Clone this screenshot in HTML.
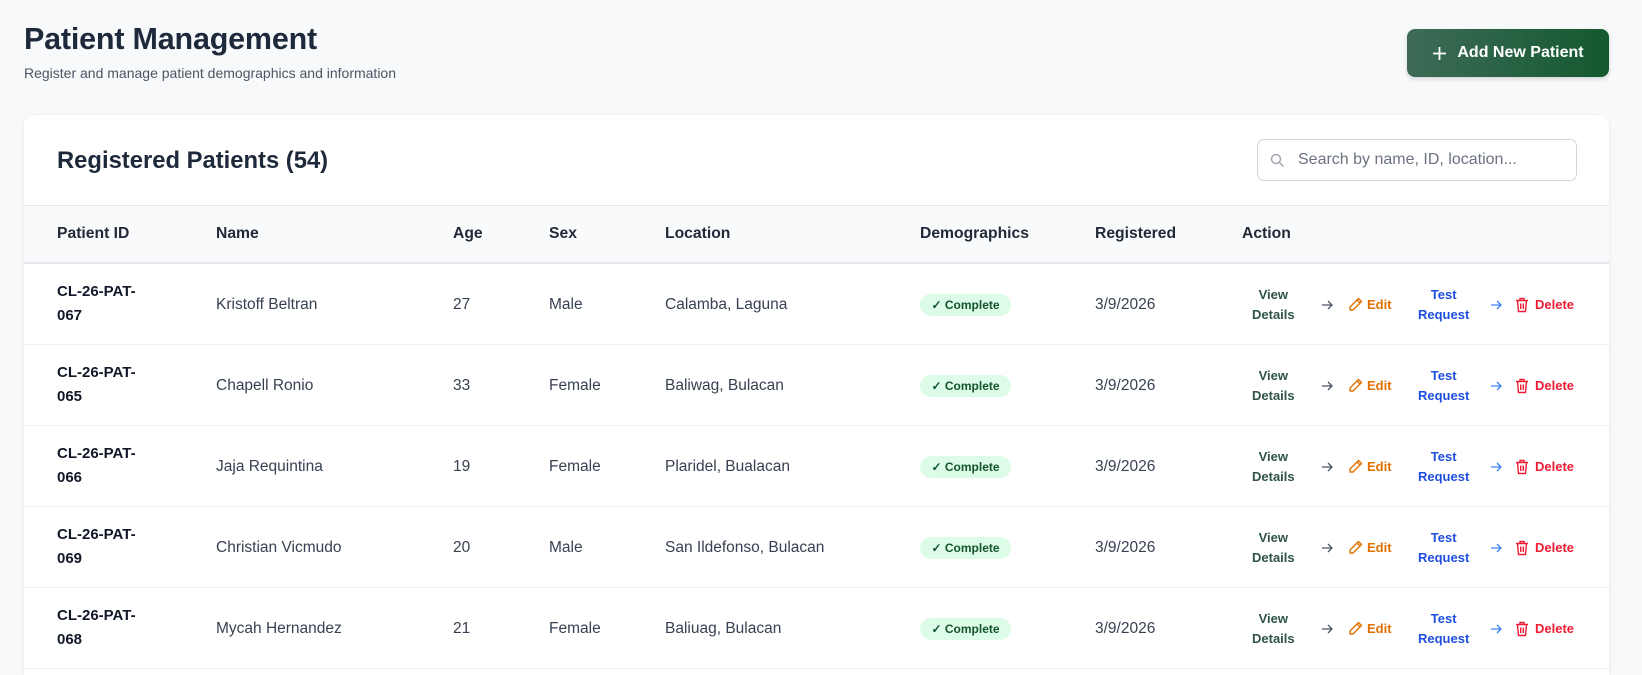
<!DOCTYPE html>
<html><head><meta charset="utf-8"><style>
*{margin:0;padding:0;box-sizing:border-box}
html,body{width:1642px;height:675px;overflow:hidden}
body{background:#f8f9fb;font-family:"Liberation Sans",Arial,sans-serif;color:#1f2937;position:relative}
.abs{position:absolute}
h1{position:absolute;left:24px;top:22px;font-size:30.5px;font-weight:700;color:#1e293b;letter-spacing:-0.2px}
.sub{left:24px;top:65px;font-size:14px;color:#4b5563}
.btn{left:1407px;top:29px;width:202px;height:48px;border-radius:8px;background:linear-gradient(90deg,#3e6b58,#13592f);color:#fff;font-weight:700;font-size:16px;display:flex;align-items:center;justify-content:center;gap:10px;box-shadow:0 2px 4px rgba(0,0,0,.15)}
.card{left:24px;top:115px;width:1585px;height:560px;background:#fff;border-radius:10px 10px 0 0;box-shadow:0 1px 4px rgba(0,0,0,.08);overflow:hidden}
.ct{left:33px;top:32px;font-size:23.8px;font-weight:700;color:#1e293b}
.search{left:1233px;top:24px;width:320px;height:42px;border:1px solid #d1d5db;border-radius:7px}
.search span{position:absolute;left:40px;top:11px;font-size:16px;color:#6b7280}
.thead{left:0;top:90px;width:100%;height:59px;background:#f9fafb;border-top:1px solid #e5e7eb;border-bottom:2px solid #e5e7eb}
.th{position:absolute;top:19px;font-size:15.7px;font-weight:700;color:#1f2937}
.row{left:0;width:100%;height:81px;border-bottom:1px solid #eef0f2}
.td{position:absolute;font-size:15.5px;color:#374151;top:32px}
.id{position:absolute;left:33px;top:16px;font-size:15px;font-weight:700;line-height:24px;color:#111827}
.badge{position:absolute;left:896px;top:30px;width:91px;height:22px;border-radius:11px;background:#dcfce7;color:#14532d;font-size:12px;font-weight:700;text-align:center;line-height:22px}
.act{position:absolute;font-size:13px;font-weight:700;line-height:20px;text-align:center}
</style></head><body>
<h1>Patient Management</h1>
<div class="abs sub">Register and manage patient demographics and information</div>
<div class="abs btn"><svg width="15" height="15" viewBox="0 0 15 15"><path d="M7.5 1v13M1 7.5h13" stroke="#fff" stroke-width="1.8"/></svg>Add New Patient</div>
<div class="abs card">
<div class="abs ct">Registered Patients (54)</div>
<div class="abs search"><svg class="abs" style="left:12px;top:13px" width="15" height="15" viewBox="0 0 15 15"><circle cx="6" cy="6" r="4.5" fill="none" stroke="#9ca3af" stroke-width="1.4"/><path d="M9.5 9.5l4 4" stroke="#9ca3af" stroke-width="1.4"/></svg><span>Search by name, ID, location...</span></div>
<div class="abs thead">
<div class="th" style="left:33px">Patient ID</div><div class="th" style="left:192px">Name</div><div class="th" style="left:429px">Age</div><div class="th" style="left:525px">Sex</div><div class="th" style="left:641px">Location</div><div class="th" style="left:896px">Demographics</div><div class="th" style="left:1071px">Registered</div><div class="th" style="left:1218px">Action</div>
</div>
ROWS
</div>
<script>
var d=[["067","Kristoff Beltran","27","Male","Calamba, Laguna"],["065","Chapell Ronio","33","Female","Baliwag, Bulacan"],["066","Jaja Requintina","19","Female","Plaridel, Bualacan"],["069","Christian Vicmudo","20","Male","San Ildefonso, Bulacan"],["068","Mycah Hernandez","21","Female","Baliuag, Bulacan"]];
var h="";d.forEach(function(r,i){var t=149+i*81;
h+='<div class="abs row" style="top:'+t+'px"><div class="id">CL-26-PAT-<br>'+r[0]+'</div><div class="td" style="left:192px">'+r[1]+'</div><div class="td" style="left:429px">'+r[2]+'</div><div class="td" style="left:525px">'+r[3]+'</div><div class="td" style="left:641px">'+r[4]+'</div><div class="badge">✓ Complete</div><div class="td" style="left:1071px">3/9/2026</div>'+
'<div class="act" style="left:1228px;top:21px;color:#2f5443">View<br>Details</div>'+
'<svg class="abs" style="left:1297px;top:36px" width="12" height="10" viewBox="0 0 12 10"><path d="M1 5h10M7 1l4 4-4 4" fill="none" stroke="#4b5563" stroke-width="1.3"/></svg>'+
'<svg class="abs" style="left:1324px;top:33px" width="15" height="15" viewBox="0 0 15 15"><path d="M10.5 1.5l3 3L5 13H2v-3z M9 3l3 3" fill="none" stroke="#e07000" stroke-width="1.4" stroke-linejoin="round"/></svg>'+
'<div class="act" style="left:1343px;top:31px;color:#e07000">Edit</div>'+
'<div class="act" style="left:1394px;top:21px;color:#1f4fe0">Test<br>Request</div>'+
'<svg class="abs" style="left:1466px;top:36px" width="12" height="10" viewBox="0 0 12 10"><path d="M1 5h10M7 1l4 4-4 4" fill="none" stroke="#3b82f6" stroke-width="1.3"/></svg>'+
'<svg class="abs" style="left:1491px;top:33px" width="14" height="16" viewBox="0 0 14 16"><path d="M1 3.5h12M5 3.5V1.5h4v2M2.5 3.5l1 11h7l1-11M5.7 6.5v5.5M8.3 6.5v5.5" fill="none" stroke="#ef1c34" stroke-width="1.4"/></svg>'+
'<div class="act" style="left:1511px;top:31px;color:#ef1c34">Delete</div></div>';});
document.querySelector('.card').innerHTML=document.querySelector('.card').innerHTML.replace('ROWS',h);
</script>
</body></html>
